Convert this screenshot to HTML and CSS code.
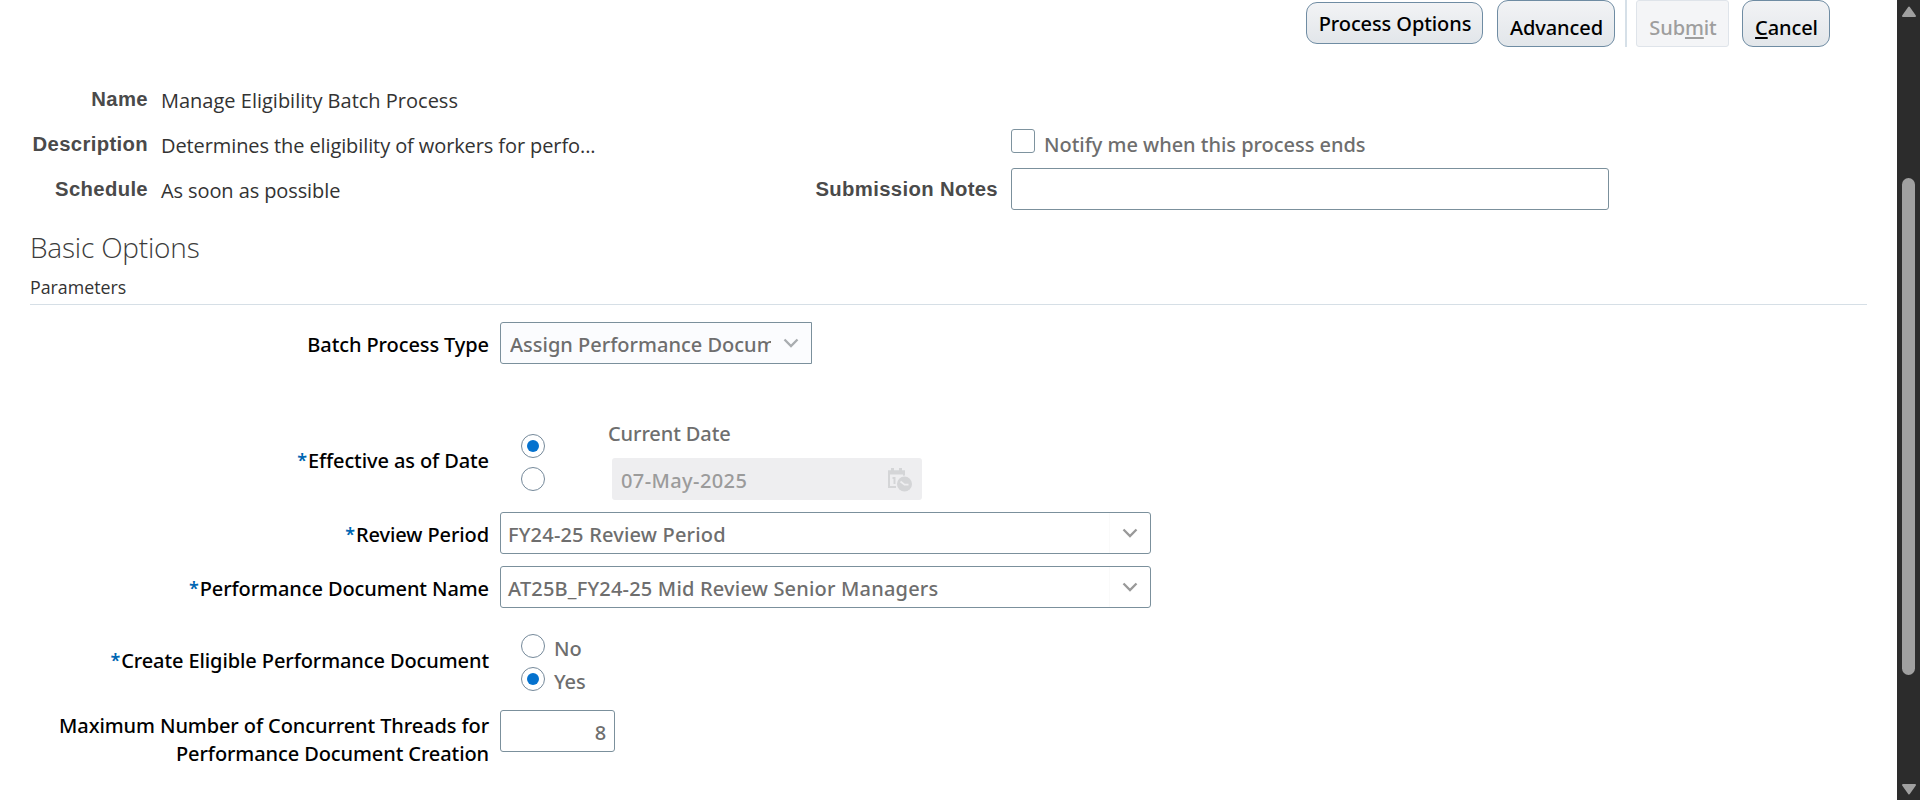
FILE: index.html
```
<!DOCTYPE html>
<html lang="en">
<head>
<meta charset="utf-8">
<title>Manage Eligibility Batch Process</title>
<link rel="stylesheet" href="styles.css">
</head>
<body>
<main class="page">
  <div class="toolbar">
    <div class="btn btn-options"><span>Process Options</span></div>
    <div class="btn btn-advanced"><span>Advanced</span></div>
    <div class="divider"></div>
    <div class="btn btn-submit"><span>Sub<span class="key">m</span>it</span></div>
    <div class="btn btn-cancel"><span><span class="key">C</span>ancel</span></div>
  </div>

  <section class="info">
    <div class="info-label">Name</div>
    <div class="info-value name">Manage Eligibility Batch Process</div>
    <div></div>
    <div></div>
    <div class="info-label">Description</div>
    <div class="info-value">Determines the eligibility of workers for perfo...</div>
    <div></div>
    <div class="notify"><span class="checkbox"></span><span class="notify-text">Notify me when this process ends</span></div>
    <div class="info-label">Schedule</div>
    <div class="info-value">As soon as possible</div>
    <div class="info-label">Submission Notes</div>
    <div class="notes"><div class="box"></div></div>
  </section>

  <h1 class="heading">Basic Options</h1>
  <div class="subheading">Parameters</div>
  <div class="rule"></div>

  <section class="form">
    <div class="row row-type">
      <div class="label">Batch Process Type</div>
      <div class="box select-type">
        <span class="clip">Assign Performance Document</span>
        <svg class="chevron" width="16" height="10" viewBox="0 0 16 10"><path d="M1.500 1.500 8 8l6.500-6.500"/></svg>
      </div>
    </div>
    <div class="row row-date">
      <div class="label"><span class="star">*</span>Effective as of Date</div>
      <div class="radios date-radios">
        <span class="radio on"></span>
        <span class="radio"></span>
      </div>
      <div class="date">
        <div class="date-title">Current Date</div>
        <div class="date-box">
          <span class="date-text">07-May-2025</span>
          <svg width="26" height="25" viewBox="0 0 26 25">
            <path d="M2 20V4.500h15v5M1 20h8" fill="none" stroke="#d4d5d7" stroke-width="2"/>
            <path d="M1 3.500h17v4H1zM4 1h3v4H4zM12 1h3v4h-3z" fill="#d4d5d7"/>
            <path d="M5.500 11h2v6" fill="none" stroke="#d4d5d7" stroke-width="2"/>
            <circle cx="17.500" cy="17" r="8.500" fill="#eeeef0"/>
            <circle cx="17.500" cy="17" r="7.500" fill="#d4d5d7"/>
            <path d="M13.500 14.500l4 3.200h4" fill="none" stroke="#eeeef0" stroke-width="1.800"/>
          </svg>
        </div>
      </div>
    </div>
    <div class="row row-field">
      <div class="label"><span class="star">*</span>Review Period</div>
      <div class="box combo"><span class="combo-text">FY24-25 Review Period</span><span class="combo-btn"><svg class="chevron dark" width="16" height="10" viewBox="0 0 16 10"><path d="M1.500 1.500 8 8l6.500-6.500"/></svg></span></div>
    </div>
    <div class="row row-field">
      <div class="label"><span class="star">*</span>Performance Document Name</div>
      <div class="box combo"><span class="combo-text">AT25B_FY24-25 Mid Review Senior Managers</span><span class="combo-btn"><svg class="chevron dark" width="16" height="10" viewBox="0 0 16 10"><path d="M1.500 1.500 8 8l6.500-6.500"/></svg></span></div>
    </div>
    <div class="row row-create">
      <div class="label"><span class="star">*</span>Create Eligible Performance Document</div>
      <div class="radios">
        <div class="choice"><span class="radio"></span><span class="choice-text">No</span></div>
        <div class="choice"><span class="radio on"></span><span class="choice-text">Yes</span></div>
      </div>
    </div>
    <div class="row row-threads">
      <div class="label">Maximum Number of Concurrent Threads for<br>Performance Document Creation</div>
      <div class="box threads">8</div>
    </div>
  </section>
</main>

<aside class="scrollbar">
  <svg width="16" height="12" viewBox="0 0 16 12"><path d="M8 1.500 14 10H2z"/></svg>
  <div class="thumb"></div>
  <svg class="down" width="16" height="12" viewBox="0 0 16 12"><path d="M2 2h12L8 10.500z"/></svg>
</aside>
</body>
</html>
```
FILE: styles.css
```
* { box-sizing: border-box; }

body {
  margin: 0;
  height: 800px;
  display: flex;
  overflow: hidden;
  background: #fff;
  color: #000;
  font: 500 20px/28px "Noto Sans", "Open Sans", sans-serif;
  letter-spacing: -0.1px;
}

.page { width: 1897px; flex: none; }

/* Toolbar */
.toolbar {
  display: flex;
  height: 78px;
  padding-left: 1306px;
  align-items: flex-start;
}
.btn {
  height: 47px;
  display: flex;
  align-items: center;
  justify-content: center;
  padding: 9px 0 0 1px;
  border: 1px solid #6f8ca3;
  border-radius: 11px;
  background: linear-gradient(#f2f3f5, #e2e6ea);
  white-space: nowrap;
}
.btn-options { width: 177px; height: 42px; margin: 2px 14px 0 0; padding-top: 2px; }
.btn-advanced { width: 118px; margin-right: 10px; }
.divider { width: 2px; height: 47px; margin-right: 9px; background: #d6e0e8; }
.btn-submit {
  width: 93px;
  margin-right: 13px;
  border-color: #dfe4ea;
  border-radius: 3px;
  background: #f4f5f7;
  color: #9e9e9e;
}
.btn-cancel { width: 88px; }
.key {
  text-decoration: underline;
  text-decoration-thickness: 2px;
  text-underline-offset: 2px;
  text-decoration-skip-ink: none;
}

/* Process summary */
.info {
  display: grid;
  grid-template-columns: 148px 598px 226px 598px;
  grid-template-rows: repeat(3, 45px);
  column-gap: 13px;
}
.info-label {
  text-align: right;
  font: bold 20.300px/42px "Liberation Sans", Arial, sans-serif;
  letter-spacing: 0.350px;
  color: #4a4a4a;
}
.info-value {
  font: 400 20px/45px "Open Sans", "Noto Sans", sans-serif;
  letter-spacing: -0.1px;
  color: #333;
}
.info-value.name { letter-spacing: 0; }
.notify { display: flex; padding-top: 6px; color: #6e6e6e; }
.checkbox {
  width: 24px;
  height: 24px;
  margin-right: 9px;
  border: 1px solid #7e939f;
  border-radius: 3px;
}
.notify-text { line-height: 32px; letter-spacing: -0.030px; }

.box {
  height: 42px;
  border: 1px solid #7b909c;
  border-radius: 3px;
  background: #fff;
}

.heading {
  margin: 14px 0 0 30px;
  font: 300 28px/40px "Open Sans", "Noto Sans", sans-serif;
  letter-spacing: -0.2px;
  color: #3c3c3c;
}
.subheading {
  height: 37px;
  margin-left: 30px;
  font: 400 17.800px/40px "Open Sans", "Noto Sans", sans-serif;
  letter-spacing: 0;
  color: #333;
}
.rule { height: 1px; margin: 0 30px; background: #d6dfe6; }

/* Parameters form */
.form { padding-top: 17px; }
.row { display: flex; }
.label {
  width: 489px;
  margin-right: 11px;
  display: flex;
  align-items: center;
  justify-content: flex-end;
  text-align: right;
  white-space: nowrap;
}
.star { margin-right: 1px; padding-bottom: 2px; font-size: 18px; font-weight: 600; color: #0066b3; }

.row-type { margin-bottom: 57px; }
.row-type .label, .row-field .label { padding-top: 4px; }
.select-type {
  width: 312px;
  display: flex;
  align-items: center;
  padding-left: 9px;
  border-radius: 3px 0 0 3px;
  background: #fbfcfe;
  color: #6e6e6e;
}
.clip { width: 261px; margin-right: 12px; padding-top: 4px; overflow: hidden; white-space: nowrap; letter-spacing: 0; }
.chevron { fill: none; stroke: #a9adb0; stroke-width: 2.300; }
.chevron.dark { stroke: #999; }

.row-date { height: 79px; margin-bottom: 12px; }
.radios { margin-left: 21px; }
.date-radios { padding-top: 13px; }
.radio {
  display: flex;
  width: 24px;
  height: 24px;
  margin-bottom: 9px;
  align-items: center;
  justify-content: center;
  border: 1px solid #75899a;
  border-radius: 50%;
}
.radio.on::before {
  content: "";
  width: 12px;
  height: 12px;
  border-radius: 50%;
  background: #0572ce;
}
.date { margin-left: 63px; color: #6e6e6e; }
.date-title { height: 37px; line-height: 25px; }
.date-box {
  width: 310px;
  height: 42px;
  margin-left: 4px;
  padding: 0 9px;
  display: flex;
  align-items: center;
  justify-content: space-between;
  border-radius: 3px;
  background: #eeeef0;
  color: #9b9b9b;
}
.date-text { padding-top: 3px; letter-spacing: 0.400px; }

.row-field { margin-bottom: 12px; }
.combo { width: 651px; display: flex; justify-content: space-between; color: #6e6e6e; }
.combo-text { padding: 8px 0 0 7px; letter-spacing: 0.190px; }
.combo-btn {
  width: 41px;
  display: flex;
  align-items: center;
  justify-content: center;
  border-left: 1px solid #fafafa;
}

.row-create { height: 57px; margin: 26px 0 19px; }
.row-create .label { padding-bottom: 4px; }
.choice { display: flex; color: #6e6e6e; }
.choice-text { margin-left: 9px; line-height: 30px; height: 33px; }
.row-threads .label { padding-top: 2px; }
.threads { width: 115px; padding: 8px 8px 0 0; text-align: right; color: #6e6e6e; }

/* Page scrollbar */
.scrollbar {
  width: 23px;
  display: flex;
  flex-direction: column;
  align-items: center;
  padding: 6px 0 5px;
  background: #2c2c2c;
}
.scrollbar svg { fill: #a0a0a0; stroke: #a0a0a0; stroke-width: 2; stroke-linejoin: round; }
.thumb { width: 13px; height: 497px; margin-top: 160px; border-radius: 7px; background: #a0a0a0; }
.down { margin-top: auto; }
```
